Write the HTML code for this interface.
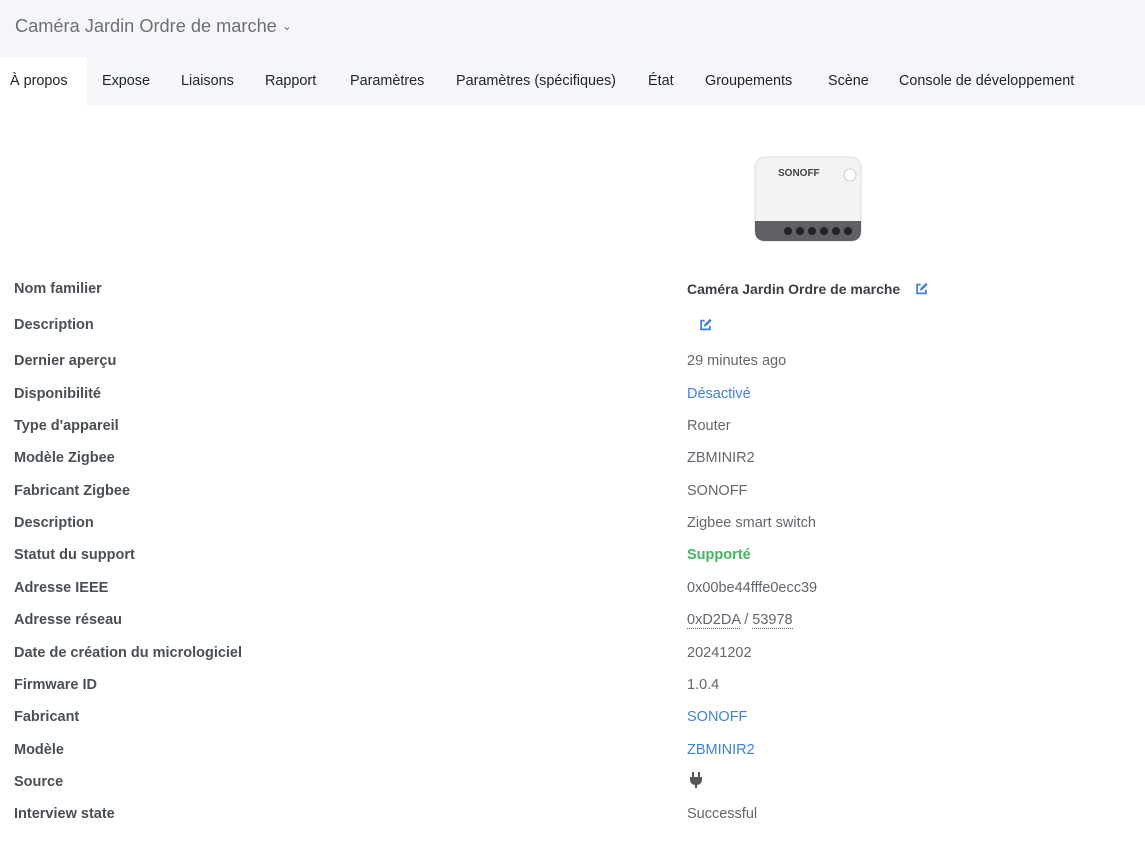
<!DOCTYPE html>
<html><head><meta charset="utf-8"><style>
body{margin:0;width:1145px;height:846px;background:#fff;font-family:"Liberation Sans",sans-serif;overflow:hidden;position:relative}
.hdr{position:absolute;left:0;top:0;width:1145px;height:105px;background:#f5f6fa}
.title{position:absolute;left:15px;top:16px;font-size:18.2px;color:#6c6f76}
.tab{position:absolute;top:57px;line-height:48px;font-size:14.4px;color:#212529;white-space:nowrap}
.acttab{position:absolute;left:0;top:57px;width:87px;height:48px;background:#fff}
.row{position:absolute;left:0;font-size:14.5px;line-height:20px}
.l{position:absolute;left:14px;color:#4a4f55;font-weight:bold;white-space:nowrap}
.v{position:absolute;left:687px;color:#62676d;white-space:nowrap}
.blue{color:#3f7fe0}.green{color:#43b560;font-weight:bold}
</style></head><body>
<div class="hdr"></div>
<div class="title">Caméra Jardin Ordre de marche <span style="font-size:12px;position:relative;top:-2px">&#8964;</span></div>
<div class="acttab"></div>
<div class="tab" style="left:10px">À propos</div>
<div class="tab" style="left:102px">Expose</div>
<div class="tab" style="left:181px">Liaisons</div>
<div class="tab" style="left:265px">Rapport</div>
<div class="tab" style="left:350px">Paramètres</div>
<div class="tab" style="left:456px">Paramètres (spécifiques)</div>
<div class="tab" style="left:648px">État</div>
<div class="tab" style="left:705px">Groupements</div>
<div class="tab" style="left:828px">Scène</div>
<div class="tab" style="left:899px">Console de développement</div>
<svg style="position:absolute;left:752px;top:155px" width="112" height="90" viewBox="0 0 112 90">
<rect x="3" y="2" width="106" height="84" rx="10" fill="#f3f3f3" stroke="#ddd"/>
<path d="M3 66 H109 V76 Q109 86 99 86 H13 Q3 86 3 76Z" fill="#5f6063"/>
<g fill="#222"><circle cx="36" cy="76" r="4"/><circle cx="48" cy="76" r="4"/><circle cx="60" cy="76" r="4"/><circle cx="72" cy="76" r="4"/><circle cx="84" cy="76" r="4"/><circle cx="96" cy="76" r="4"/></g>
<text x="26" y="21" font-size="10" font-weight="bold" fill="#444" font-family="Liberation Sans">SONOFF</text>
<circle cx="98" cy="20" r="6" fill="#fff" stroke="#ccc"/>
</svg>
<div class="row" style="top:279px"><span class="l">Nom familier</span><span class="v" style="color:#3c4046;font-weight:bold;font-size:14px">Caméra Jardin Ordre de marche</span></div>
<svg style="position:absolute;left:914px;top:282px" width="15" height="14" viewBox="0 0 16 16"><path d="M7 3H3v10h10V9" fill="none" stroke="#3f7fe0" stroke-width="2"/><path d="M6 10l1-3 6-6 2 2-6 6z" fill="#3f7fe0"/></svg>
<div class="row" style="top:315px"><span class="l">Description</span></div>
<svg style="position:absolute;left:698px;top:318px" width="15" height="14" viewBox="0 0 16 16"><path d="M7 3H3v10h10V9" fill="none" stroke="#3f7fe0" stroke-width="2"/><path d="M6 10l1-3 6-6 2 2-6 6z" fill="#3f7fe0"/></svg>
<div class="row" style="top:351px"><span class="l">Dernier aperçu</span><span class="v">29 minutes ago</span></div>
<div class="row" style="top:384px"><span class="l">Disponibilité</span><span class="v blue">Désactivé</span></div>
<div class="row" style="top:416px"><span class="l">Type d'appareil</span><span class="v">Router</span></div>
<div class="row" style="top:448px"><span class="l">Modèle Zigbee</span><span class="v">ZBMINIR2</span></div>
<div class="row" style="top:481px"><span class="l">Fabricant Zigbee</span><span class="v">SONOFF</span></div>
<div class="row" style="top:513px"><span class="l">Description</span><span class="v">Zigbee smart switch</span></div>
<div class="row" style="top:545px"><span class="l">Statut du support</span><span class="v green">Supporté</span></div>
<div class="row" style="top:578px"><span class="l">Adresse IEEE</span><span class="v">0x00be44fffe0ecc39</span></div>
<div class="row" style="top:610px"><span class="l">Adresse réseau</span><span class="v"><span style="border-bottom:1px dotted #62676d">0xD2DA</span> / <span style="border-bottom:1px dotted #62676d">53978</span></span></div>
<div class="row" style="top:643px"><span class="l">Date de création du micrologiciel</span><span class="v">20241202</span></div>
<div class="row" style="top:675px"><span class="l">Firmware ID</span><span class="v">1.0.4</span></div>
<div class="row" style="top:707px"><span class="l">Fabricant</span><span class="v blue">SONOFF</span></div>
<div class="row" style="top:740px"><span class="l">Modèle</span><span class="v blue">ZBMINIR2</span></div>
<div class="row" style="top:772px"><span class="l">Source</span></div>
<svg style="position:absolute;left:689px;top:772px" width="14" height="16" viewBox="0 0 14 16"><rect x="3" y="0" width="2" height="5" fill="#555"/><rect x="9" y="0" width="2" height="5" fill="#555"/><path d="M1 5h12v3a5 5 0 0 1-5 5v3h-2v-3a5 5 0 0 1-5-5z" fill="#555"/></svg>
<div class="row" style="top:804px"><span class="l">Interview state</span><span class="v">Successful</span></div>
</body></html>
